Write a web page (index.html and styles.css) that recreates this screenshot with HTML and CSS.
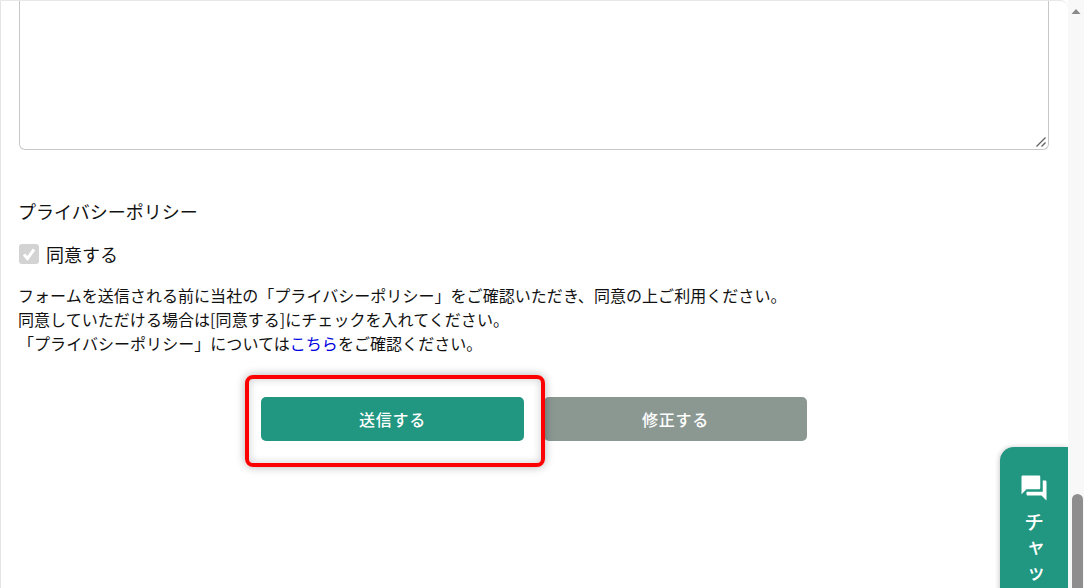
FILE: index.html
```html
<!DOCTYPE html>
<html lang="ja">
<head>
<meta charset="utf-8">
<title>フォーム確認</title>
<link rel="stylesheet" href="styles.css">
</head>
<body>
<div class="window">
  <main class="page">
    <div class="textarea">
      <svg class="grip" width="12" height="12" viewBox="0 0 12 12"><path d="M1.5 10.5L10.5 1.5M6.5 10.5L10.5 6.5" stroke="#666" stroke-width="1.4" fill="none"/></svg>
    </div>
    <h2 class="label">プライバシーポリシー</h2>
    <label class="agree">
      <span class="check"><svg width="20" height="20" viewBox="0 0 20 20"><path d="M5 10.5L8.5 14.5L15 5.5" stroke="#fff" stroke-width="3" fill="none"/></svg></span>
      <span>同意する</span>
    </label>
    <p class="note">フォームを送信される前に当社の「プライバシーポリシー」をご確認いただき、同意の上ご利用ください。<br>同意していただける場合は[同意する]にチェックを入れてください。<br>「プライバシーポリシー」については<a class="link" href="#">こちら</a>をご確認ください。</p>
    <div class="actions">
      <button class="btn btn-send" type="button">送信する</button>
      <button class="btn btn-fix" type="button">修正する</button>
    </div>
    <div class="highlight"></div>
    <aside class="chat">
      <svg class="chat-icon" width="30" height="30" viewBox="0 0 24 24"><path fill="#fff" d="M21 6h-2v9H6v2c0 .55.45 1 1 1h11l4 4V7c0-.55-.45-1-1-1zm-4 6V3c0-.55-.45-1-1-1H3c-.55 0-1 .45-1 1v14l4-4h10c.55 0 1-.45 1-1z"/></svg>
      <span class="chat-text">チャット</span>
    </aside>
  </main>
  <div class="scrollbar">
    <svg class="arrow" width="16" height="16" viewBox="0 0 16 16"><path d="M3.5 11L8 6l4.5 5z" fill="#8a8a8a"/></svg>
    <div class="thumb"></div>
  </div>
</div>
</body>
</html>
```
FILE: styles.css
```css
html, body {
  margin: 0;
  height: 100%;
  overflow: hidden;
  background: #fff;
}
body {
  font-family: "Noto Sans CJK JP", "Liberation Sans", sans-serif;
  color: #111;
}
.window {
  display: flex;
  height: 588px;
}
.page {
  position: relative;
  flex: 1;
  overflow: hidden;
  box-sizing: border-box;
  padding: 0 19px 0 18px;
  border-left: 1px solid #e4e4e4;
  border-top: 1px solid #e8e8e8;
  border-top-right-radius: 8px;
}
.textarea {
  position: relative;
  box-sizing: border-box;
  height: 150px;
  margin-top: -1px;
  border: 1px solid #c8c8c8;
  border-top: 0;
  border-radius: 0 0 6px 6px;
}
.grip {
  position: absolute;
  right: 1px;
  bottom: 1px;
}
.label {
  margin: 48px 0 0 -1px;
  font-size: 18px;
  font-weight: 400;
  line-height: 26px;
}
.agree {
  display: flex;
  align-items: center;
  gap: 7px;
  margin-top: 17px;
  font-size: 18px;
  line-height: 26px;
}
.check {
  display: block;
  width: 20px;
  height: 20px;
  border-radius: 3px;
  background: #d3d3d3;
}
.check svg { display: block; }
.note {
  margin: 16px 0 0 -1px;
  font-size: 16px;
  line-height: 24px;
  letter-spacing: .05px;
}
.link { color: #0000e0; text-decoration: none; }
.actions {
  display: flex;
  justify-content: center;
  gap: 20px;
  margin-top: 42px;
}
.btn {
  width: 263px;
  height: 44px;
  border: 0;
  border-radius: 5px;
  color: #fff;
  font: 500 16px/44px "Noto Sans CJK JP", sans-serif;
  letter-spacing: .8px;
  padding: 0;
}
.btn-send { background: #219680; }
.btn-fix { background: #8b9892; }
.highlight {
  position: absolute;
  left: 244px;
  top: 374px;
  width: 300px;
  height: 92px;
  box-sizing: border-box;
  border: 4px solid #ff0000;
  border-radius: 8px;
  box-shadow: 0 0 10px rgba(0,0,0,.3), inset 0 0 8px rgba(0,0,0,.2);
}
.chat {
  position: absolute;
  left: 999px;
  top: 446px;
  width: 68px;
  height: 160px;
  display: flex;
  flex-direction: column;
  align-items: center;
  padding-top: 26px;
  box-sizing: border-box;
  background: #219680;
  border-radius: 14px 0 0 0;
  box-shadow: -1px 0 5px rgba(0,0,0,.2);
  color: #fff;
}
.chat-icon { display: block; flex: none; }
.chat-text {
  flex: none;
  writing-mode: vertical-rl;
  white-space: nowrap;
  margin-top: 9px;
  font-size: 20px;
  font-weight: 500;
  letter-spacing: 6px;
}
.scrollbar {
  position: relative;
  flex: 0 0 16px;
  background: #f8f8f8;
}
.arrow {
  display: block;
  margin-top: 3px;
}
.thumb {
  position: absolute;
  left: 4px;
  right: 1px;
  top: 494px;
  bottom: 0;
  border-radius: 6px 6px 0 0;
  background: #8e8e8e;
}
```
